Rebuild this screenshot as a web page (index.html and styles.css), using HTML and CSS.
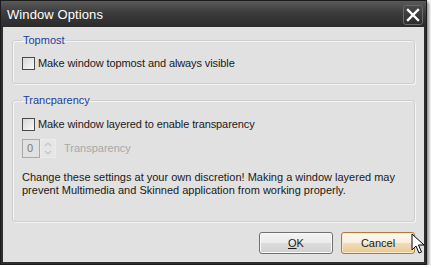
FILE: index.html
```html
<!DOCTYPE html>
<html>
<head>
<meta charset="utf-8">
<link rel="stylesheet" href="styles.css">
</head>
<body>
<div class="window">
  <div class="titlebar">
    <span class="title">Window Options</span>
    <span class="close"><svg width="14" height="14" viewBox="0 0 14 14"><path d="M2 2 L12 12 M12 2 L2 12" stroke="#fff" stroke-width="2.4" stroke-linecap="square"/></svg></span>
  </div>
  <div class="content">
    <fieldset class="group g1">
      <legend>Topmost</legend>
      <label class="check"><span class="box"></span>Make window topmost and always visible</label>
    </fieldset>
    <fieldset class="group g2">
      <legend>Trancparency</legend>
      <label class="check"><span class="box"></span>Make window layered to enable transparency</label>
      <div class="spinrow">
        <span class="spin-input">0</span>
        <span class="spin-arrows"><svg width="16" height="19" viewBox="0 0 16 19"><path d="M5 7 L8 4 L11 7" fill="none" stroke="#c4c4c4" stroke-width="1.2"/><path d="M5 12 L8 15 L11 12" fill="none" stroke="#c4c4c4" stroke-width="1.2"/></svg></span>
        <span class="spin-label">Transparency</span>
      </div>
      <p class="note">Change these settings at your own discretion! Making a window layered may prevent Multimedia and Skinned application from working properly.</p>
    </fieldset>
    <div class="buttons">
      <button class="btn"><u>O</u>K</button>
      <button class="btn default">Cancel</button>
    </div>
  </div>
  <svg class="cursor" width="14" height="22" viewBox="0 0 14 22"><path d="M1 1 L1 17 L5 13 L8 20 L10.5 19 L7.5 12 L13 12 Z" fill="#fff" stroke="#000" stroke-width="1"/></svg>
</div>
</body>
</html>
```
FILE: styles.css
```css
html, body {
  margin: 0;
  padding: 0;
  background: #ffffff;
}
body {
  font-family: "Liberation Sans", Arial, sans-serif;
  font-size: 11px;
  color: #1a1a1a;
}
.window {
  position: relative;
  width: 427px;
  height: 265px;
  box-sizing: border-box;
  background: #2e2e2e;
  border: 1px solid #1c1c1c;
  box-shadow: 2px 2px 3px rgba(0,0,0,0.45);
  display: flex;
  flex-direction: column;
}
.titlebar {
  height: 26px;
  flex: none;
  display: flex;
  align-items: center;
  justify-content: space-between;
  padding: 0 3px 0 6px;
  background: linear-gradient(#5a5a5a 0%, #3c3c3c 45%, #2b2b2b 100%);
}
.title {
  color: #ffffff;
  font-size: 13px;
  font-weight: normal;
  letter-spacing: 0.1px;
  margin-top: 1px;
}
.close {
  width: 20px;
  height: 20px;
  box-sizing: border-box;
  border: 1px solid #6a6a6a;
  border-radius: 3px;
  background: linear-gradient(#4a4a4a, #2c2c2c);
  display: flex;
  align-items: center;
  justify-content: center;
  margin-top: 1px;
}
.content {
  flex: 1;
  margin: 0 2px 2px 2px;
  background: #e1e1e1;
  padding: 7px 9px 0 9px;
  display: flex;
  flex-direction: column;
}
.group {
  margin: 0;
  padding: 0 9px;
  border: 1px solid #cfcfcf;
  border-radius: 3px;
  box-shadow: inset 1px 1px 0 #f4f4f4, 1px 1px 0 #f4f4f4;
  min-width: 0;
}
.group legend {
  color: #1c3c9c;
  padding: 0 1px;
  margin-left: 0;
  font-size: 11px;
  line-height: 13px;
}
.g1 {
  height: 50px;
  box-sizing: border-box;
  padding-top: 9px;
}
.g2 {
  margin-top: 10px;
  height: 128px;
  box-sizing: border-box;
  padding-top: 10px;
}
.check {
  display: flex;
  align-items: center;
  gap: 3px;
  height: 14px;
  letter-spacing: -0.1px;
}
.box {
  width: 11px;
  height: 11px;
  border: 1px solid #4a4a4a;
  background: linear-gradient(135deg, #d8d8d8, #f8f8f8);
  display: inline-block;
}
.spinrow {
  display: flex;
  align-items: center;
  margin-top: 7px;
  height: 20px;
}
.spin-input {
  width: 18px;
  height: 19px;
  box-sizing: border-box;
  border: 1px solid #a9a9a9;
  color: #7a7a7a;
  padding-left: 4px;
  line-height: 17px;
}
.spin-arrows {
  width: 16px;
  height: 19px;
  box-sizing: border-box;
  border: 1px solid #ececec;
  background: #e6e6e6;
  display: flex;
}
.spin-arrows svg { display: block; margin: -1px; }
.spin-label {
  color: #a8a8a8;
  margin-left: 8px;
}
.note {
  margin: 13px 0 0 0;
  line-height: 13px;
}
.buttons {
  display: flex;
  justify-content: flex-end;
  gap: 8px;
  margin-top: 10px;
}
.btn {
  width: 74px;
  height: 22px;
  font-family: "Liberation Sans", Arial, sans-serif;
  font-size: 11px;
  color: #1a1a1a;
  border: 1px solid #707070;
  border-radius: 3px;
  background: linear-gradient(#f4f4f4 0%, #ebebeb 50%, #dcdcdc 51%, #d0d0d0 100%);
  box-shadow: inset 0 0 0 1px #fafafa;
  padding: 0;
}
.btn.default {
  border-color: #b07a3a;
  background: linear-gradient(#fdf8f0 0%, #f9efdf 50%, #f1dcb8 51%, #e9c994 100%);
  box-shadow: inset 0 0 0 1px #f8e8c8;
}
.cursor {
  position: absolute;
  left: 410px;
  top: 232px;
}
```
